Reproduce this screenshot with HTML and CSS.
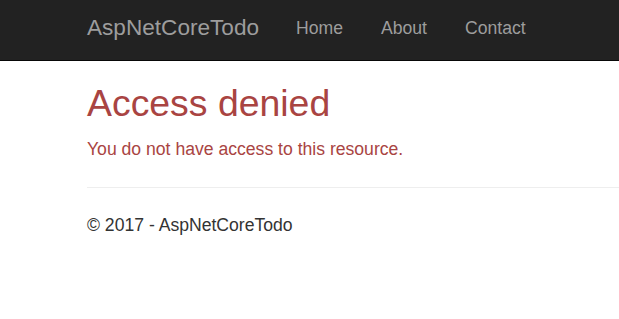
FILE: index.html
```html
<!DOCTYPE html>
<html lang="en">
<head>
  <meta charset="UTF-8" />
  <title>Access denied - AspNetCoreTodo</title>
  <link rel="stylesheet" href="styles.css">
</head>
<body>

  <nav class="navbar">
    <div class="navbar-inner">
      <a class="navbar-brand" href="#">AspNetCoreTodo</a>
      <ul class="nav">
        <li><a href="#">Home</a></li>
        <li><a href="#">About</a></li>
        <li><a href="#">Contact</a></li>
      </ul>
    </div>
  </nav>

  <div class="body-content">
    <header>
      <h2 class="text-danger">Access denied</h2>
      <p class="text-danger">You do not have access to this resource.</p>
    </header>

    <hr />

    <footer>
      <p>&copy; 2017 - AspNetCoreTodo</p>
    </footer>
  </div>

</body>
</html>
```

FILE: styles.css
```css
/* Reset */
* {
  margin: 0;
  padding: 0;
  box-sizing: border-box;
}

body {
  font-family: "Liberation Sans", Arial, sans-serif;
  font-size: 17.6px;
  line-height: 1.42857;
  color: #333;
  background: #fff;
}

a {
  text-decoration: none;
}

/* Top navbar */
.navbar {
  height: 61px;
  background-color: #222;
  border-bottom: 1px solid #080808;
}

.navbar-inner {
  display: flex;
  align-items: flex-start;
  height: 60px;
  padding-left: 69px;
}

.navbar-brand {
  font-size: 22.6px;
  color: #9d9d9d;
  padding: 0 18px;
  line-height: 55px;
}

.nav {
  display: flex;
  list-style: none;
}

.nav a {
  display: block;
  padding: 0 19px;
  line-height: 56px;
  color: #9d9d9d;
}

/* Page content */
.body-content {
  padding-left: 87px;
}

h2 {
  font-size: 37.4px;
  font-weight: 500;
  line-height: 1.1;
  margin-top: 22px;
  margin-bottom: 13px;
}

.text-danger {
  color: #a94442;
}

p {
  margin-bottom: 12px;
}

hr {
  border: 0;
  border-top: 1px solid #eee;
  margin-top: 25px;
  margin-bottom: 25px;
}
```
